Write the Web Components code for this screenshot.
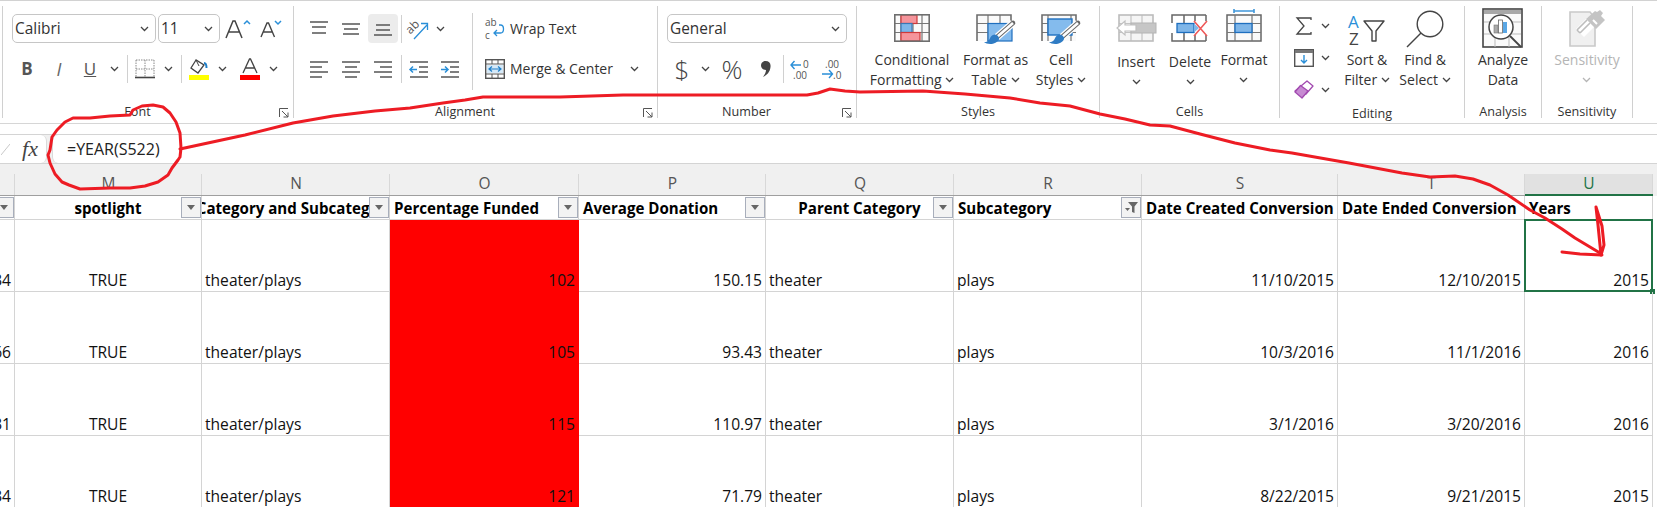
<!DOCTYPE html>
<html>
<head>
<meta charset="utf-8">
<title>Excel</title>
<style>
  html, body { margin: 0; height: 507px; overflow: hidden; background: #fff; }
  body { position: relative; font-family: "Open Sans", "Noto Sans", sans-serif; }
  svg { overflow: visible; }
</style>
</head>
<body>
<xl-ribbon>
  <xl-group label="Font" launcher style="width:292px;border-left:1px solid #d0d0d0">
    <xl-stack style="padding-left:9px">
      <xl-row>
        <xl-combo style="width:144px">Calibri</xl-combo>
        <xl-combo style="width:62px;margin-left:2px">11</xl-combo>
        <xl-tool style="width:34px;margin-left:1px"><svg width="26" height="22" viewBox="0 0 26 22"><path d="M1 20 8 3h2l7 17M4 14h10" fill="none" stroke="#444" stroke-width="1.5"/><path d="M19 6l3-3 3 3" fill="none" stroke="#2a8fd8" stroke-width="1.5"/></svg></xl-tool>
        <xl-tool style="width:32px"><svg width="22" height="20" viewBox="0 0 22 20"><path d="M1 18 7 4h1.500l6 14M3.500 13h9" fill="none" stroke="#444" stroke-width="1.4"/><path d="M15 2l3 3 3-3" fill="none" stroke="#2a8fd8" stroke-width="1.5"/></svg></xl-tool>
      </xl-row>
      <xl-row style="margin-top:11px">
        <xl-tool style="width:30px;font:700 17px 'Open Sans',sans-serif;color:#555">B</xl-tool>
        <xl-tool style="width:34px;font:italic 400 18px 'Open Sans',sans-serif;color:#666">I</xl-tool>
        <xl-tool style="width:28px;font:400 17px 'Open Sans',sans-serif;color:#555;text-decoration:underline">U</xl-tool>
        <xl-tool style="width:20px"><xl-chev></xl-chev></xl-tool>
        <xl-tool style="width:6px"><xl-sep></xl-sep></xl-tool>
        <xl-tool style="width:30px"><svg width="20" height="20" viewBox="0 0 20 20"><path d="M1 1h18M1 10h18M1 1v17M10 1v17M19 1v17" fill="none" stroke="#888" stroke-width="1" stroke-dasharray="1.5 1"/><path d="M0 18.500h20" stroke="#444" stroke-width="1.6"/></svg></xl-tool>
        <xl-tool style="width:16px"><xl-chev></xl-chev></xl-tool>
        <xl-tool style="width:10px"><xl-sep></xl-sep></xl-tool>
        <xl-tool style="width:27px"><svg width="21" height="22" viewBox="0 0 21 22"><path d="M7 2 2 10l7 5 6-8z" fill="#fff" stroke="#444" stroke-width="1.3"/><path d="M7 2l3 6" stroke="#444"/><path d="M15 5c2 0 2.500 2 2.500 5" fill="none" stroke="#1f7fc9" stroke-width="2"/><rect x="0" y="17" width="20" height="5" fill="#ffff00"/></svg></xl-tool>
        <xl-tool style="width:18px"><xl-chev></xl-chev></xl-tool>
        <xl-tool style="width:38px"><svg width="20" height="22" viewBox="0 0 20 22"><path d="M3 15 9.500 1h1L17 15M5.500 10h9" fill="none" stroke="#444" stroke-width="1.3"/><rect x="0" y="17" width="20" height="5" fill="#ff0000"/></svg></xl-tool>
        <xl-tool style="width:8px"><xl-chev></xl-chev></xl-tool>
      </xl-row>
    </xl-stack>
  </xl-group>

  <xl-group label="Alignment" launcher style="width:364px">
    <xl-stack style="padding-left:10px;width:178px;box-sizing:border-box">
      <xl-row>
        <xl-tool style="width:30px"><svg width="18" height="18" viewBox="0 0 18 18"><path d="M0 2h18M2 7h14M2 13h14" stroke="#555" stroke-width="1.400"/></svg></xl-tool>
        <xl-tool style="width:30px;margin-left:2px"><svg width="18" height="18" viewBox="0 0 18 18"><path d="M0 4h18M2 9h14M1 14h16" stroke="#555" stroke-width="1.400"/></svg></xl-tool>
        <xl-tool active style="width:30px;margin-left:2px"><svg width="18" height="18" viewBox="0 0 18 18"><path d="M2 5h14M2 10h14M0 15h18" stroke="#555" stroke-width="1.400"/></svg></xl-tool>
        <xl-tool style="width:6px"><xl-sep></xl-sep></xl-tool>
        <xl-tool style="width:28px"><svg width="22" height="24" viewBox="0 0 22 24"><text x="0" y="14" transform="rotate(-45 6 12)" font-family="Open Sans, sans-serif" font-size="12" fill="#555">ab</text><path d="M7 22 20 8M14 6.500h6.500V13" fill="none" stroke="#2a8fd8" stroke-width="1.300"/></svg></xl-tool>
        <xl-tool style="width:16px"><xl-chev></xl-chev></xl-tool>
      </xl-row>
      <xl-row style="margin-top:11px">
        <xl-tool style="width:30px"><svg width="18" height="18" viewBox="0 0 18 18"><path d="M0 2h18M0 7h12M0 12h18M0 17h12" stroke="#555" stroke-width="1.400"/></svg></xl-tool>
        <xl-tool style="width:30px;margin-left:2px"><svg width="18" height="18" viewBox="0 0 18 18"><path d="M0 2h18M3 7h12M0 12h18M3 17h12" stroke="#555" stroke-width="1.400"/></svg></xl-tool>
        <xl-tool style="width:30px;margin-left:2px"><svg width="18" height="18" viewBox="0 0 18 18"><path d="M0 2h18M6 7h12M0 12h18M6 17h12" stroke="#555" stroke-width="1.400"/></svg></xl-tool>
        <xl-tool style="width:6px"><xl-sep></xl-sep></xl-tool>
        <xl-tool style="width:28px"><svg width="19" height="18" viewBox="0 0 19 18"><path d="M1 2h18M10 7h9M10 12h9M1 17h18" stroke="#555" stroke-width="1.400"/><path d="M8 9.500H1M4 6.500l-3 3 3 3" fill="none" stroke="#2a8fd8" stroke-width="1.500"/></svg></xl-tool>
        <xl-tool style="width:30px;margin-left:2px"><svg width="19" height="18" viewBox="0 0 19 18"><path d="M1 2h18M10 7h9M10 12h9M1 17h18" stroke="#555" stroke-width="1.400"/><path d="M1 9.500h7M5 6.500l3 3-3 3" fill="none" stroke="#2a8fd8" stroke-width="1.500"/></svg></xl-tool>
      </xl-row>
    </xl-stack>
    <xl-sep style="height:77px;margin-top:-1px"></xl-sep>
    <xl-stack style="padding-left:12px">
      <xl-row>
        <xl-tool style="width:20px;margin-right:5px"><svg width="20" height="22" viewBox="0 0 20 22"><text x="0" y="8" font-family="Open Sans, sans-serif" font-size="10" fill="#555">ab</text><text x="0" y="21" font-family="Open Sans, sans-serif" font-size="10" fill="#555">c</text><path d="M14 7h1.500c4 0 4 8 0 8H9M12 12l-3 3 3 3" fill="none" stroke="#2a8fd8" stroke-width="1.300"/></svg></xl-tool>
        <xl-text>Wrap Text</xl-text>
      </xl-row>
      <xl-row style="margin-top:11px">
        <xl-tool style="width:20px;margin-right:5px"><svg width="20" height="20" viewBox="0 0 20 20"><rect x=".7" y=".7" width="18.600" height="18.600" fill="#fff" stroke="#555" stroke-width="1.400"/><path d="M1 5h18M1 15h18M7 1v4M13 1v4M7 15v4M13 15v4" stroke="#555"/><rect x="2" y="6" width="16" height="8" fill="#d5e9f8"/><path d="M4 10h12M7 7.500 4 10l3 2.500M13 7.500l3 2.500-3 2.500" fill="none" stroke="#1f7fc9" stroke-width="1.200"/></svg></xl-tool>
        <xl-text>Merge &amp; Center</xl-text>
        <xl-tool style="width:16px;margin-left:14px"><xl-chev></xl-chev></xl-tool>
      </xl-row>
    </xl-stack>
  </xl-group>

  <xl-group label="Number" launcher style="width:199px">
    <xl-stack style="padding-left:9px">
      <xl-row><xl-combo style="width:180px">General</xl-combo></xl-row>
      <xl-row style="margin-top:11px">
        <xl-tool style="width:30px;font-size:26px;font-weight:300;color:#444">$</xl-tool>
        <xl-tool style="width:16px"><xl-chev></xl-chev></xl-tool>
        <xl-tool style="width:38px;font-size:26px;font-weight:300;color:#444">%</xl-tool>
        <xl-tool style="width:29px"><svg width="10" height="16" viewBox="0 0 10 16"><path d="M4.500 0C8 0 10 2 9.500 6 9 11 6 14 2 16c2-3 3-5 3-7C2 9 0 7 0 4.500 0 2 2 0 4.500 0z" fill="#444"/></svg></xl-tool>
        <xl-tool style="width:6px"><xl-sep></xl-sep></xl-tool>
        <xl-tool style="width:28px"><svg width="20" height="20" viewBox="0 0 20 20"><path d="M11 6H1M4.500 2 1 6l3.500 4" fill="none" stroke="#2a8fd8" stroke-width="1.400"/><text x="13" y="9" font-family="Open Sans, sans-serif" font-size="10" fill="#555">0</text><text x="3" y="20" font-family="Open Sans, sans-serif" font-size="10" fill="#555">.00</text></svg></xl-tool>
        <xl-tool style="width:36px"><svg width="20" height="20" viewBox="0 0 20 20"><text x="3" y="9" font-family="Open Sans, sans-serif" font-size="10" fill="#555">.00</text><path d="M0 15h10M7 11l3.500 4L7 19" fill="none" stroke="#2a8fd8" stroke-width="1.400"/><text x="11" y="20" font-family="Open Sans, sans-serif" font-size="10" fill="#555">.0</text></svg></xl-tool>
      </xl-row>
    </xl-stack>
  </xl-group>

  <xl-group label="Styles" style="width:243px">
    <xl-stack row style="padding-left:10px">
      <xl-large style="width:90px">
        <svg slot="icon" width="36" height="28" viewBox="0 0 36 28"><rect x="1" y="1" width="34" height="26" fill="#fafafa"/><path d="M1 9.500h34M1 18.500h34M7 1v26M19 1v26M28 1v26" stroke="#777" stroke-width="1.200"/><rect x="7" y="1" width="16" height="8.500" fill="#f5949b" stroke="#cf3a3a" stroke-width="1.200"/><rect x="7" y="9.500" width="11" height="9" fill="#7fb6e8" stroke="#3a78b5" stroke-width="1.200"/><rect x="7" y="18.500" width="19" height="8.500" fill="#f5949b" stroke="#cf3a3a" stroke-width="1.200"/><rect x=".8" y=".8" width="34.400" height="26.400" fill="none" stroke="#6e6e6e" stroke-width="1.600"/></svg>
        Conditional<br>Formatting <xl-chev></xl-chev>
      </xl-large>
      <xl-large style="width:77px">
        <svg slot="icon" width="40" height="32" viewBox="0 0 40 32"><rect x="1" y="1" width="34" height="26" fill="#fafafa"/><path d="M1 9.500h34M1 18.500h34M12 1v26M24 1v26" stroke="#777" stroke-width="1.200"/><rect x="12" y="9.500" width="24" height="17.500" fill="#84bbed" stroke="#1e6fbf" stroke-width="1.200"/><path d="M1 27V1h34v8" fill="none" stroke="#6e6e6e" stroke-width="1.600"/><path d="M37 9 21 23" stroke="#fff" stroke-width="7"/><path d="M37 9 21 23" stroke="#666" stroke-width="4.600" stroke-linecap="round"/><path d="M37 9 21 23" stroke="#fff" stroke-width="2.600"/><path d="M17 21c-3 1-3 5-5 6-1 1-3 1-4 1 3 3 13 3 15-3 1-2-3-6-6-4z" fill="#2f7cc4"/></svg>
        Format as<br>Table <xl-chev></xl-chev>
      </xl-large>
      <xl-large style="width:54px">
        <svg slot="icon" width="40" height="32" viewBox="0 0 40 32"><rect x="1" y="1" width="34" height="26" fill="#fafafa"/><path d="M1 9.500h34M1 18.500h34M7 1v26M30 1v26" stroke="#777" stroke-width="1.200"/><rect x="7" y="5" width="24" height="16" fill="#84bbed" stroke="#1e6fbf" stroke-width="1.400"/><path d="M1 27V1h34v8" fill="none" stroke="#6e6e6e" stroke-width="1.600"/><path d="M37 9 21 23" stroke="#fff" stroke-width="7"/><path d="M37 9 21 23" stroke="#666" stroke-width="4.600" stroke-linecap="round"/><path d="M37 9 21 23" stroke="#fff" stroke-width="2.600"/><path d="M17 21c-3 1-3 5-5 6-1 1-3 1-4 1 3 3 13 3 15-3 1-2-3-6-6-4z" fill="#2f7cc4"/></svg>
        Cell<br>Styles <xl-chev></xl-chev>
      </xl-large>
    </xl-stack>
  </xl-group>

  <xl-group label="Cells" style="width:180px;--pad:2px">
    <xl-stack row style="padding-left:9px">
      <xl-large style="width:54px;--icon:42px;--shift:2px">
        <svg slot="icon" style="margin-top:6px" width="40" height="28" viewBox="0 0 40 28"><rect x="3" y="1" width="34" height="26" fill="#f5f5f5"/><path d="M15 1v26M26 1v26M3 9.500h34M3 18.500h34" stroke="#c4c4c4" stroke-width="1.200"/><rect x="3" y="1" width="34" height="26" fill="none" stroke="#bcbcbc" stroke-width="1.600"/><rect x="15" y="9" width="25" height="10" fill="#c6c6c6" stroke="#b4b4b4"/><path d="M20 11H9V7L1 14l8 7v-4h11z" fill="#fff" stroke="#c0c0c0" stroke-width="1.200"/></svg>
        Insert<br><xl-chev></xl-chev>
      </xl-large>
      <xl-large style="width:54px;--icon:42px;--shift:2px">
        <svg slot="icon" style="margin-top:6px" width="38" height="28" viewBox="0 0 38 28"><path d="M1 9V1h34M1 19v8h34M13 1v8M24 1v6M13 19v8M24 21v6M35 1v6M35 21v6" fill="none" stroke="#666" stroke-width="1.500"/><rect x="6" y="9.500" width="17" height="9" fill="#7fb6e8" stroke="#1e6fbf" stroke-width="1.300"/><path d="M23 9.500 28 14l-5 4.500z" fill="#7fb6e8"/><path d="M23 7 36 22M36 7 23 22" stroke="#ef5a5a" stroke-width="1.600"/></svg>
        Delete<br><xl-chev></xl-chev>
      </xl-large>
      <xl-large style="width:54px;--icon:42px">
        <svg slot="icon" width="36" height="34" viewBox="0 0 36 34"><path d="M8 1v4M28 1v4M8 3h20" stroke="#3f97da" stroke-width="1.600" fill="none"/><rect x="1" y="7" width="34" height="26" fill="#fafafa" stroke="#666" stroke-width="1.500"/><path d="M1 15.500h34M1 24.500h34M9 7v26M26 7v26" stroke="#777" stroke-width="1.200"/><rect x="9" y="15.500" width="17" height="9" fill="#7fb6e8" stroke="#1e6fbf" stroke-width="1.300"/></svg>
        Format<br><xl-chev></xl-chev>
      </xl-large>
    </xl-stack>
  </xl-group>

  <xl-group label="Editing" style="width:185px;--pad:2px">
    <xl-stack row style="padding-left:10px">
      <xl-stack style="width:46px;padding-top:2px">
        <xl-row style="height:32px;padding-left:3px">
          <xl-tool style="width:22px"><svg width="16" height="18" viewBox="0 0 16 18"><path d="M15 3V1H1l7 8-7 8h14v-2" fill="none" stroke="#444" stroke-width="1.300"/></svg></xl-tool>
          <xl-tool style="width:20px"><xl-chev></xl-chev></xl-tool>
        </xl-row>
        <xl-row style="height:32px;padding-left:3px">
          <xl-tool style="width:22px"><svg width="20" height="18" viewBox="0 0 20 18"><rect x=".7" y=".7" width="18.600" height="16.600" fill="#fff" stroke="#555" stroke-width="1.400"/><rect x="1" y="1" width="18" height="3" fill="#777"/><path d="M10 6v8M7 11l3 3 3-3" fill="none" stroke="#2a8fd8" stroke-width="1.400"/></svg></xl-tool>
          <xl-tool style="width:20px"><xl-chev></xl-chev></xl-tool>
        </xl-row>
        <xl-row style="height:32px;padding-left:3px">
          <xl-tool style="width:22px"><svg width="20" height="20" viewBox="0 0 20 20"><path d="M13 1 19 6 12 14 1 11z" fill="#fff" stroke="#a24ab0" stroke-width="1.300" stroke-linejoin="round"/><path d="M6.500 5.500 14 11l-6 7-7-6z" fill="#c78bd2" stroke="#a24ab0" stroke-width="1.300" stroke-linejoin="round"/></svg></xl-tool>
          <xl-tool style="width:20px"><xl-chev></xl-chev></xl-tool>
        </xl-row>
      </xl-stack>
      <xl-large style="width:62px;--icon:42px">
        <svg slot="icon" style="margin-top:4px" width="38" height="36" viewBox="0 0 38 36"><text x="0" y="16" font-family="Open Sans, sans-serif" font-size="17" fill="#2a8fd8">A</text><text x="1" y="33" font-family="Open Sans, sans-serif" font-size="17" fill="#444">Z</text><path d="M16 9h20l-8 10v10h-4V19z" fill="none" stroke="#444" stroke-width="1.400" stroke-linejoin="round"/></svg>
        Sort &amp;<br>Filter <xl-chev></xl-chev>
      </xl-large>
      <xl-large style="width:54px;--icon:42px">
        <svg slot="icon" style="margin-top:2px" width="38" height="38" viewBox="0 0 38 38"><circle cx="24" cy="14" r="12.800" fill="none" stroke="#444" stroke-width="1.400"/><path d="M15 23 1 37" stroke="#444" stroke-width="1.400"/></svg>
        Find &amp;<br>Select <xl-chev></xl-chev>
      </xl-large>
    </xl-stack>
  </xl-group>

  <xl-group label="Analysis" style="width:77px;--pad:2px">
    <xl-stack row style="justify-content:center;width:100%">
      <xl-large style="--icon:42px">
        <svg slot="icon" width="41" height="40" viewBox="0 0 41 40"><rect x="1" y="1" width="39" height="38" fill="#fafafa" stroke="#444" stroke-width="1.600"/><rect x="2" y="2" width="37" height="4" fill="#a8a8a8"/><path d="M2 14h37M2 26h37M13 26v13M27 26v13" stroke="#bbb"/><circle cx="19" cy="19" r="12" fill="#fff" stroke="#444" stroke-width="1.500"/><rect x="12" y="17" width="4" height="8" fill="#aaa" stroke="#777" stroke-width=".6"/><rect x="16.500" y="12" width="4" height="13" fill="#fff" stroke="#666" stroke-width=".8"/><rect x="21" y="14" width="4" height="11" fill="#5aa7e5"/><path d="M28 28 39 39" stroke="#444" stroke-width="1.800"/></svg>
        Analyze<br>Data
      </xl-large>
    </xl-stack>
  </xl-group>

  <xl-group label="Sensitivity" style="width:91px;--pad:2px">
    <xl-stack row style="justify-content:center;width:100%">
      <xl-large style="--icon:42px;color:#b5b5b5">
        <svg slot="icon" style="margin-top:2px" width="36" height="38" viewBox="0 0 36 38"><path d="M1 2h20l5 6v28H1z" fill="#f0f0f0" stroke="#c9c9c9" stroke-width="1.600"/><path d="M7 19 19 7l8 8-12 12z" fill="#fff"/><path d="M8 20 18 10M11 23l10-10M8 20l3 3" stroke="#bdbdbd" stroke-width="1.600" fill="none"/><path d="M17 9 27 19l9-9-4-4 2-3-3-3-3 2-2-1z" fill="#c4c4c4"/><path d="M24 10l4 4" stroke="#fff" stroke-width="2"/></svg>
        Sensitivity<br><xl-chev style="--chev:#b5b5b5"></xl-chev>
      </xl-large>
    </xl-stack>
  </xl-group>
</xl-ribbon>

<xl-formula>=YEAR(S522)</xl-formula>

<xl-sheet>
  <xl-col></xl-col><xl-col>M</xl-col><xl-col>N</xl-col><xl-col>O</xl-col><xl-col>P</xl-col><xl-col>Q</xl-col><xl-col>R</xl-col><xl-col>S</xl-col><xl-col>T</xl-col><xl-col current>U</xl-col><xl-col blank></xl-col>

  <xl-head filter></xl-head>
  <xl-head filter align="c">spotlight</xl-head>
  <xl-head filter align="c">Category and Subcategory</xl-head>
  <xl-head filter>Percentage Funded</xl-head>
  <xl-head filter>Average Donation</xl-head>
  <xl-head filter align="c">Parent Category</xl-head>
  <xl-head filter="on">Subcategory</xl-head>
  <xl-head>Date Created Conversion</xl-head>
  <xl-head>Date Ended Conversion</xl-head>
  <xl-head>Years</xl-head>
  <xl-cell blank></xl-cell>

  <xl-cell align="r">34</xl-cell><xl-cell align="c">TRUE</xl-cell><xl-cell>theater/plays</xl-cell><xl-cell align="r" hot>102</xl-cell><xl-cell align="r">150.15</xl-cell><xl-cell>theater</xl-cell><xl-cell>plays</xl-cell><xl-cell align="r">11/10/2015</xl-cell><xl-cell align="r">12/10/2015</xl-cell><xl-cell align="r" selected>2015</xl-cell><xl-cell blank></xl-cell>
  <xl-cell align="r">66</xl-cell><xl-cell align="c">TRUE</xl-cell><xl-cell>theater/plays</xl-cell><xl-cell align="r" hot>105</xl-cell><xl-cell align="r">93.43</xl-cell><xl-cell>theater</xl-cell><xl-cell>plays</xl-cell><xl-cell align="r">10/3/2016</xl-cell><xl-cell align="r">11/1/2016</xl-cell><xl-cell align="r">2016</xl-cell><xl-cell blank></xl-cell>
  <xl-cell align="r">31</xl-cell><xl-cell align="c">TRUE</xl-cell><xl-cell>theater/plays</xl-cell><xl-cell align="r" hot>115</xl-cell><xl-cell align="r">110.97</xl-cell><xl-cell>theater</xl-cell><xl-cell>plays</xl-cell><xl-cell align="r">3/1/2016</xl-cell><xl-cell align="r">3/20/2016</xl-cell><xl-cell align="r">2016</xl-cell><xl-cell blank></xl-cell>
  <xl-cell align="r">34</xl-cell><xl-cell align="c">TRUE</xl-cell><xl-cell>theater/plays</xl-cell><xl-cell align="r" hot>121</xl-cell><xl-cell align="r">71.79</xl-cell><xl-cell>theater</xl-cell><xl-cell>plays</xl-cell><xl-cell align="r">8/22/2015</xl-cell><xl-cell align="r">9/21/2015</xl-cell><xl-cell align="r">2015</xl-cell><xl-cell blank></xl-cell>
</xl-sheet>

<xl-ink></xl-ink>

<script>
// every element is a small shell: styles + slot, set in the class
const shell = (name, template) => customElements.define(name, class extends HTMLElement {
  constructor() {
    super();
    this.attachShadow({mode: 'open'});
    this.shadowRoot.innerHTML = template;
  }
});

shell('xl-ribbon', `<style>
  :host {
    display: flex;
    box-sizing: border-box;
    height: 124px;
    padding: 5px 0 0 2px;
    border-top: 1px solid #d2d2d2;
    border-bottom: 1px solid #d6d6d6;
    background: #fff;
    color: #333;
    font: 400 13.4px/20px "Open Sans", "Noto Sans", sans-serif;
  }
</style><slot></slot>`);

customElements.define('xl-group', class XlGroup extends HTMLElement {
  constructor() {
    super();
    this.attachShadow({mode: 'open'});
    this.shadowRoot.innerHTML = `<style>
      :host {
        display: flex;
        flex: none;
        flex-direction: column;
        position: relative;
        box-sizing: border-box;
        height: 112px;
        border-right: 1px solid #d0d0d0;
      }
      .body { display: flex; flex: 1; padding-top: var(--pad, 8px); }
      .label {
        height: 15px;
        margin-bottom: -1px;
        line-height: 15px;
        font-size: 12.6px;
        text-align: center;
        color: #333;
      }
      :host([launcher]) .label { padding-right: 21px; }
      svg { display: none; position: absolute; right: 4px; bottom: 0; }
      :host([launcher]) svg { display: block; }
    </style>
    <div class="body"><slot></slot></div>
    <div class="label"></div>
    <svg width="10" height="10" viewBox="0 0 10 10"><path d="M.5 9V.5H9M3 3l6 6M9 4.500V9H4.500" fill="none" stroke="#555"/></svg>`;
  }
  connectedCallback() {
    this.shadowRoot.querySelector('.label').textContent = this.getAttribute('label');
  }
});

shell('xl-stack', `<style>
  :host { display: flex; flex-direction: column; flex: none; }
  :host([row]) { flex-direction: row; }
</style><slot></slot>`);

shell('xl-row', `<style>
  :host { display: flex; align-items: center; height: 29px; white-space: nowrap; }
</style><slot></slot>`);

shell('xl-tool', `<style>
  :host {
    display: flex;
    flex: none;
    align-items: center;
    justify-content: center;
    box-sizing: border-box;
    height: 29px;
    border-radius: 4px;
  }
  :host([active]) { background: #ececec; }
</style><slot></slot>`);

shell('xl-text', `<style>
  :host { display: block; font-size: 14px; color: #333; white-space: nowrap; }
</style><slot></slot>`);

shell('xl-sep', `<style>
  :host { display: block; flex: none; width: 1px; height: 28px; background: #d0d0d0; }
</style>`);

shell('xl-chev', `<style>
  :host { display: inline-block; width: 9px; height: 6px; vertical-align: 2px; }
  svg { display: block; }
</style><svg width="9" height="6" viewBox="0 0 9 6"><path d="M1 1l3.500 3.500L8 1" fill="none" stroke="var(--chev, #444)" stroke-width="1.300"/></svg>`);

shell('xl-combo', `<style>
  :host {
    display: flex;
    flex: none;
    align-items: center;
    justify-content: space-between;
    box-sizing: border-box;
    height: 29px;
    padding: 0 6px 0 2px;
    border: 1px solid #c6c6c6;
    border-radius: 5px;
    font-size: 15.4px;
    color: #333;
  }
</style><slot></slot><xl-chev></xl-chev>`);

shell('xl-large', `<style>
  :host {
    display: flex;
    flex: none;
    flex-direction: column;
    align-items: center;
    text-align: center;
    white-space: nowrap;
    font-size: 14px;
  }
  .icon { display: flex; justify-content: center; align-items: flex-start; height: var(--icon, 36px); }
  .text { padding-top: var(--shift, 0); }
</style><div class="icon"><slot name="icon"></slot></div><div class="text"><slot></slot></div>`);

shell('xl-formula', `<style>
  :host {
    display: flex;
    box-sizing: border-box;
    height: 30px;
    margin-top: 10px;
    border-top: 1px solid #d4d4d4;
    border-bottom: 1px solid #d4d4d4;
    background: #f0f0f0;
    font: 400 16px "Open Sans", sans-serif;
    color: #222;
  }
  .fx {
    display: flex;
    align-items: center;
    justify-content: flex-end;
    box-sizing: border-box;
    width: 47px;
    padding-right: 8px;
    background: #fff;
    border-right: 1px solid #dadada;
    border-radius: 0 6px 6px 0;
    font: italic 400 22px "Liberation Serif", serif;
    color: #444;
  }
  .fx svg { margin-right: 12px; }
  .edit {
    display: flex;
    align-items: center;
    flex: 1;
    margin-left: 5px;
    padding-left: 14px;
    background: #fff;
    border-left: 1px solid #dadada;
    border-radius: 6px 0 0 6px;
  }
</style><div class="fx"><svg width="9" height="12" viewBox="0 0 9 12"><path d="M0 12 9 1" stroke="#c8c8c8"/></svg>fx</div><div class="edit"><slot></slot></div>`);

shell('xl-sheet', `<style>
  :host {
    display: grid;
    grid-template-columns: 15px 187px 188px 189px 187px 188px 188px 196px 187px 128px 1fr;
    grid-template-rows: 32px 24px 72px 72px 72px 72px;
    background: #fff;
    font: 400 15.6px "Open Sans", sans-serif;
    color: #111;
  }
</style><slot></slot>`);

shell('xl-col', `<style>
  :host {
    display: flex;
    align-items: flex-end;
    justify-content: center;
    box-sizing: border-box;
    padding-bottom: 1px;
    background: #f0f0f0;
    border-bottom: 1px solid #9f9f9f;
    font: 400 15.5px/22px "Open Sans", sans-serif;
    color: #555;
    position: relative;
  }
  :host::after {
    content: "";
    position: absolute;
    top: 10px;
    right: 0;
    bottom: 0;
    width: 1px;
    background: #d8d8d8;
  }
  :host([blank]) { border-bottom-color: #f0f0f0; }
  :host([blank])::after { display: none; }
  :host([current]) {
    background: linear-gradient(#f0f0f0 10px, #e1e1e1 10px);
    border-bottom: 2px solid #217346;
    padding-bottom: 0;
    color: #217346;
  }
</style><slot></slot>`);

customElements.define('xl-head', class XlHead extends HTMLElement {
  constructor() {
    super();
    this.attachShadow({mode: 'open'});
    this.shadowRoot.innerHTML = `<style>
      :host {
        display: flex;
        align-items: center;
        position: relative;
        box-sizing: border-box;
        overflow: hidden;
        padding: 0 4px;
        border-right: 1px solid #d4d4d4;
        border-bottom: 1px solid #d4d4d4;
        font-weight: 700;
        font-size: 15.1px;
        white-space: nowrap;
        color: #000;
      }
      :host([align=c]) { justify-content: center; }
      .btn {
        display: none;
        position: absolute;
        top: 1px;
        right: 0;
        box-sizing: border-box;
        width: 20px;
        height: 21px;
        background: #f3f3f3;
        border: 1px solid #a8aebb;
      }
      :host([filter]) .btn { display: flex; align-items: center; justify-content: center; }
    </style><slot></slot><div class="btn"></div>`;
  }
  connectedCallback() {
    const on = this.getAttribute('filter') === 'on';
    this.shadowRoot.querySelector('.btn').innerHTML = on
      ? '<svg width="13" height="12" viewBox="0 0 13 12"><path d="M3 0h10L9.500 4.500V11l-2.500-1V4.500z" fill="#666"/><path d="M0 6h5L2.500 9z" fill="#666"/></svg>'
      : '<svg width="8" height="5" viewBox="0 0 8 5"><path d="M0 0h8L4 5z" fill="#666"/></svg>';
  }
});

shell('xl-cell', `<style>
  :host {
    display: flex;
    align-items: flex-end;
    position: relative;
    box-sizing: border-box;
    overflow: hidden;
    padding: 0 3px 0 3px;
    border-right: 1px solid #d4d4d4;
    border-bottom: 1px solid #d4d4d4;
    white-space: nowrap;
  }
  :host([align=r]) { justify-content: flex-end; }
  :host([align=c]) { justify-content: center; }
  :host([hot]) { background: #ff0000; border-color: #ff0000; }
  :host([blank]) { border-right: 0; border-bottom: 0; }
  :host([selected]) { overflow: visible; }
  .sel, .grip { display: none; position: absolute; }
  :host([selected]) .sel {
    display: block;
    top: -1px;
    right: -1px;
    bottom: -1px;
    left: -1px;
    border: 2px solid #217346;
  }
  :host([selected]) .grip {
    display: block;
    right: -3px;
    bottom: -3px;
    width: 5px;
    height: 5px;
    background: #217346;
  }
</style><slot></slot><div class="sel"></div><div class="grip"></div>`);

// the red pen marks drawn on top of the screenshot
shell('xl-ink', `<style>
  :host { position: absolute; top: 0; left: 0; width: 1657px; height: 507px; pointer-events: none; }
  svg { display: block; }
  path { fill: none; stroke: #ed1c24; stroke-width: 3; stroke-linejoin: round; stroke-linecap: round; }
</style><svg width="1657" height="507" viewBox="0 0 1657 507">
  <path d="M180 149 245 135 293 123 333 116 375 111 410 108 443 103 465 100 483 97 560 97 623 95 690 95 750 95 807 95 818 93 830 89 845 91 860 92 923 91 965 94 1010 98 1040 103 1070 106 1100 114 1125 119 1150 125 1170 126 1200 134 1235 143 1270 150 1292 153 1349 163 1402 173 1430 177 1455 176 1473 179 1490 185 1508 195 1530 210 1545 218 1562 229 1575 238 1590 247 1600 253"/>
  <path d="M180 157 181 148 180 133 176 122 170 113 163 107 153 105 142 106 133 110 130 115 110 116 90 118 73 118 65 122 57 130 52 137 50 150 48 155 50 163 55 174 62 182 69 185 80 189 110 188 130 188 145 186 158 182 168 175 172 168 178 160 180 157"/>
  <path d="M1596 207 1598 225 1601 255 1604 245 1602 226 1596 207"/>
  <path d="M1562 252 1580 254 1602 255"/>
</svg>`);
</script>
</body>
</html>
